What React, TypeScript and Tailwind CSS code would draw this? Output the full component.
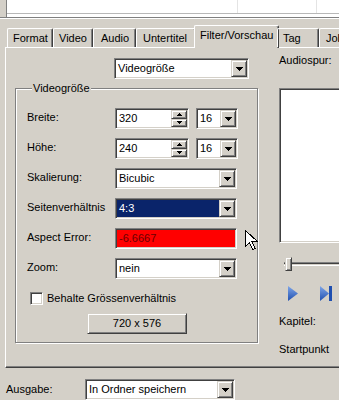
const raised =
  "bg-[#d4d0c8] border border-t-[#d4d0c8] border-l-[#d4d0c8] border-b-[#404040] border-r-[#404040] shadow-[inset_1px_1px_0_#ffffff,inset_-1px_-1px_0_#808080]";
const sunken =
  "border border-t-[#808080] border-l-[#808080] border-b-white border-r-white shadow-[inset_1px_1px_0_#404040,inset_-1px_-1px_0_#d4d0c8]";

const DownArrow = () => (
  <svg width="7" height="4" viewBox="0 0 7 4" shapeRendering="crispEdges">
    <path d="M0 0h7v1H0zM1 1h5v1H1zM2 2h3v1H2zM3 3h1v1H3z" fill="#000" />
  </svg>
);

const Combo = ({
  text,
  w,
  bg = "bg-white",
  color = "text-black",
}: {
  text: string;
  w: string;
  bg?: string;
  color?: string;
}) => (
  <div className={`${sunken} ${bg} ${w} h-[21px] p-[1px] flex`}>
    <div className={`flex-1 pl-[2px] leading-[17px] ${color}`}>{text}</div>
    <div className={`${raised} w-[16px] h-[17px] flex items-center justify-center`}>
      <DownArrow />
    </div>
  </div>
);

const SpinBtn = ({ up }: { up?: boolean }) => (
  <div className={`${raised} flex-1 flex items-center justify-center`}>
    <svg width="5" height="3" viewBox="0 0 5 3" shapeRendering="crispEdges">
      {up ? (
        <path d="M2 0h1v1H2zM1 1h3v1H1zM0 2h5v1H0z" fill="#000" />
      ) : (
        <path d="M0 0h5v1H0zM1 1h3v1H1zM2 2h1v1H2z" fill="#000" />
      )}
    </svg>
  </div>
);

const Spin = ({ value }: { value: string }) => (
  <div className={`${sunken} bg-white w-[74px] h-[21px] p-[1px] flex`}>
    <div className="flex-1 pl-[2px] leading-[17px]">{value}</div>
    <div className="w-[16px] h-[17px] flex flex-col">
      <SpinBtn up />
      <SpinBtn />
    </div>
  </div>
);

const Row = ({ label, children }: { label: string; children: React.ReactNode }) => (
  <div className="flex h-[21px]">
    <div className="w-[88px] pt-[2px] leading-[14px]">{label}</div>
    {children}
  </div>
);

const tabs = [
  { name: "Format", w: "w-[46px]", pl: "pl-[5px]" },
  { name: "Video", w: "w-[40px]", pl: "pl-[5px]" },
  { name: "Audio", w: "w-[43px]", pl: "pl-[7px]" },
  { name: "Untertitel", w: "w-[60px]", pl: "pl-[6px]" },
  { name: "Filter/Vorschau", w: "w-[85px]", pl: "pl-[5px]", active: true },
  { name: "Tag", w: "w-[42px]", pl: "pl-[5px]" },
  { name: "Job", w: "w-[40px]", pl: "pl-[6px]" },
];

export default function App() {
  return (
    <div className="w-[339px] h-[400px] overflow-hidden relative bg-[#d4d0c8] text-black text-[11px] font-['Liberation_Sans',Arial,sans-serif]">
      {/* list view above */}
      <div className="h-[17px] ml-[6px] border-l border-[#808080] bg-white">
        <div className="h-[14px] border-b border-[#b8b8b8] flex">
          <div className="w-[231px] border-r border-[#e4e4e4]" />
          <div className="w-[79px] border-r border-[#e4e4e4]" />
        </div>
      </div>
      <div className="h-[2px] border-t border-[#808080] border-b border-b-white" />

      {/* tabs */}
      <div className="h-[28px] w-[400px] pl-[7px] flex items-end relative z-10">
        {tabs.map((t) =>
          t.active ? (
            <div
              key={t.name}
              className={`${t.w} shrink-0 -mx-[2px] h-[23px] -mb-[1px] bg-[#d4d0c8] border-t border-l border-white border-r border-r-[#404040] shadow-[inset_-1px_0_0_#808080] rounded-t-[2px] ${t.pl} pt-[3px] leading-[13px] whitespace-nowrap`}
            >
              {t.name}
            </div>
          ) : (
            <div
              key={t.name}
              className={`${t.w} shrink-0 h-[19px] border-t border-l border-white border-r border-r-[#404040] shadow-[inset_-1px_0_0_#808080] rounded-t-[2px] ${t.pl} pt-[3px] leading-[13px] whitespace-nowrap`}
            >
              {t.name}
            </div>
          )
        )}
      </div>

      {/* tab panel */}
      <div className="h-[321px] w-[340px] ml-[5px] border-t border-l border-white border-b border-b-[#404040] shadow-[inset_0_-1px_0_#808080] pl-[9px] pt-[10px] flex gap-[21px]">
        {/* left column */}
        <div className="w-[243px] shrink-0 flex flex-col">
          <div className="ml-[99px]">
            <Combo text="Videogröße" w="w-[135px]" />
          </div>

          <fieldset className="mt-[2px] w-[243px] border border-[#808080] shadow-[inset_1px_1px_0_#ffffff,1px_1px_0_#ffffff] pl-[11px] pb-[8px]">
            <legend className="ml-[5px] px-[1px] leading-[14px] bg-[#d4d0c8] relative">Videogröße</legend>
            <div className="mt-[13px] flex flex-col gap-[9px]">
              <Row label="Breite:">
                <Spin value="320" />
                <div className="ml-[7px]">
                  <Combo text="16" w="w-[42px]" />
                </div>
              </Row>
              <Row label="Höhe:">
                <Spin value="240" />
                <div className="ml-[7px]">
                  <Combo text="16" w="w-[42px]" />
                </div>
              </Row>
              <Row label="Skalierung:">
                <Combo text="Bicubic" w="w-[122px]" />
              </Row>
              <Row label="Seitenverhältnis">
                <Combo text="4:3" w="w-[122px]" bg="bg-[#0a246a]" color="text-white" />
              </Row>
              <Row label="Aspect Error:">
                <div className={`${sunken} bg-[#ff0000] w-[122px] h-[21px] pl-[3px] leading-[19px] text-[#6a0000]`}>
                  -6.6667
                </div>
              </Row>
              <Row label="Zoom:">
                <Combo text="nein" w="w-[122px]" />
              </Row>
            </div>

            <div className="mt-[13px] flex items-center h-[13px]">
              <div className={`${sunken} bg-white w-[13px] h-[13px] ml-[3px]`} />
              <span className="ml-[4px] leading-[13px]">Behalte Grössenverhältnis</span>
            </div>

            <div className={`${raised} mt-[8px] ml-[60px] w-[100px] h-[21px] flex items-center justify-center`}>
              720 x 576
            </div>
          </fieldset>
        </div>

        {/* right column */}
        <div className="flex-1 flex flex-col">
          <div className="-mt-[4px] leading-[13px]">Audiospur:</div>
          <div className={`${sunken} bg-white mt-[21px] h-[155px] w-[70px]`} />

          <div className="mt-[14px] h-[14px] relative flex items-center">
            <div className="ml-[5px] flex-1 h-[4px] border-t border-[#808080] border-b border-b-white shadow-[inset_0_1px_0_#404040]" />
            <div className={`${raised} absolute left-[6px] top-0 w-[7px] h-[14px]`} />
          </div>

          <div className="mt-[14px] h-[16px] flex items-center">
            <svg className="ml-[9px]" width="10" height="15" viewBox="0 0 10 15">
              <defs>
                <linearGradient id="pb" x1="0" y1="0" x2="0" y2="1">
                  <stop offset="0" stopColor="#7fa6e8" />
                  <stop offset="1" stopColor="#1f4fb0" />
                </linearGradient>
              </defs>
              <path d="M0 0L10 7.5L0 15z" fill="url(#pb)" />
            </svg>
            <svg className="ml-[22px]" width="13" height="15" viewBox="0 0 13 15">
              <defs>
                <linearGradient id="pn" x1="0" y1="0" x2="0" y2="1">
                  <stop offset="0" stopColor="#7fa6e8" />
                  <stop offset="1" stopColor="#1f4fb0" />
                </linearGradient>
              </defs>
              <path d="M0 0L9 7.5L0 15z" fill="url(#pn)" />
              <rect x="9" y="0" width="3" height="15" fill="#1f4fb0" />
            </svg>
          </div>

          <div className="mt-[14px] leading-[13px]">Kapitel:</div>
          <div className="mt-[15px] leading-[13px]">Startpunkt</div>
        </div>
      </div>

      {/* output row */}
      <div className="mt-[11px] pl-[6px] flex">
        <div className="w-[79px] pt-[3px] leading-[14px]">Ausgabe:</div>
        <Combo text="In Ordner speichern" w="w-[150px]" />
      </div>

      {/* mouse pointer */}
      <svg className="absolute left-[245px] top-[230px]" width="13" height="20" viewBox="0 0 13 20" shapeRendering="crispEdges">
        <path d="M0.5 0.5V16.5L4.5 12.5L7.5 19.5L10 18.5L7 11.5H12.5Z" fill="#fff" stroke="#000" strokeWidth="1" />
      </svg>
    </div>
  );
}
